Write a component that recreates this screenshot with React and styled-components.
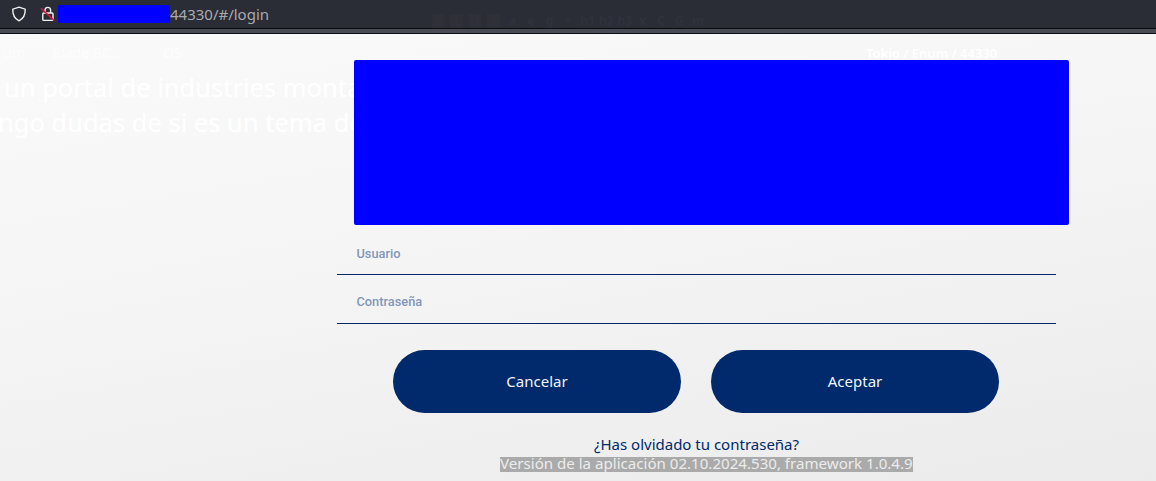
import React from 'react';
import styled, { createGlobalStyle } from 'styled-components';

const GlobalStyle = createGlobalStyle`
  html, body {
    margin: 0;
    padding: 0;
    height: 100%;
    overflow: hidden;
    background: #f0f0f0;
  }
  #root {
    height: 100%;
  }
`;

const Screen = styled.div`
  height: 481px;
  display: flex;
  flex-direction: column;
  font-family: "Noto Sans", sans-serif;
`;

const UrlBar = styled.div`
  position: relative;
  height: 28px;
  padding-left: 11px;
  display: flex;
  align-items: center;
  background: #2a2c36;
  border-bottom: 1px solid #0c0d10;
  color: #a9a9ad;
  font-size: 15px;
`;

const IconSlot = styled.span`
  display: flex;
  width: 16px;
  height: 16px;
  margin-right: ${props => props.gap}px;
`;

const Redacted = styled.span`
  width: 112px;
  height: 18px;
  background: #0000ff;
  border-radius: 2px;
`;

// leftover editor toolbar that shows through the dark bar
const GhostTools = styled.div`
  position: absolute;
  left: 410px;
  bottom: 0;
  display: flex;
  color: #2f323c;
  font-size: 12px;
  font-weight: 700;
  line-height: 14px;
`;

const GhostTool = styled.span`
  width: 18.6px;
  text-align: center;
  background: ${props => (props.filled ? '#2f2f37' : 'transparent')};
  background-clip: content-box;
  padding: 0 3px;
  box-sizing: border-box;
`;

const BarEdge = styled.div`
  height: 4px;
  background: #494c54;
  border-bottom: 1px solid #0c0d10;
`;

const Page = styled.main`
  position: relative;
  flex: 1;
  padding: 26px 0 0 337px;
  background: linear-gradient(170deg, #fafafa 0%, #f4f4f4 50%, #ebebeb 100%);
`;

const Ghost = styled.div`
  position: absolute;
  left: ${props => props.left}px;
  top: ${props => props.top}px;
  color: ${props => props.color || '#ffffff'};
  font-size: ${props => props.size}px;
  font-weight: ${props => props.weight || 400};
  white-space: nowrap;
`;

const Form = styled.form`
  position: relative;
  width: 719px;
  display: flex;
  flex-direction: column;
`;

const Banner = styled.div`
  width: 715px;
  height: 165px;
  margin-left: 17px;
  margin-bottom: 1px;
  background: #0000ff;
  border-radius: 2px;
`;

const Field = styled.div`
  height: 49px;
  box-sizing: border-box;
  padding: ${props => props.top}px 0 0 19.5px;
  border-bottom: 1px solid #002868;
  color: #8297b8;
  font-family: Roboto, sans-serif;
  font-size: 12.8px;
  font-weight: 500;
  line-height: 16px;
`;

const Buttons = styled.div`
  display: flex;
  gap: 30px;
  margin-top: 26px;
  padding-left: 56px;
`;

const Button = styled.button`
  width: 288px;
  height: 63px;
  padding: 0 0 2px;
  border: none;
  border-radius: 32px;
  background: #002a6b;
  color: #f2f4f8;
  font-family: "Noto Sans", sans-serif;
  font-size: 15px;
`;

const ForgotLink = styled.a`
  margin-top: 20px;
  text-align: center;
  color: #002a6b;
  font-size: 15px;
  line-height: 22px;
  height: 24px;
`;

const Version = styled.span`
  align-self: flex-start;
  margin-left: 163px;
  padding-bottom: 3px;
  background: #aaaaaa;
  color: #ececec;
  font-size: 15.1px;
  line-height: 12px;
  white-space: nowrap;
`;

function ShieldIcon() {
  return (
    <svg width="16" height="16" viewBox="0 0 16 16" fill="none" stroke="#f2f2f2" strokeWidth="1.4">
      <path d="M8 1.2 L14.2 3.2 C14.4 8.6 12.6 12.6 8 14.8 C3.4 12.6 1.6 8.6 1.8 3.2 Z" />
    </svg>
  );
}

function BrokenLockIcon() {
  return (
    <svg width="16" height="16" viewBox="0 0 16 16" fill="none">
      <path d="M5 7 V4.2 C5 2.4 6.2 1.4 7.8 1.4 C9.4 1.4 10.6 2.4 10.6 4.2 V7" stroke="#f2f2f2" strokeWidth="1.4" />
      <rect x="2.8" y="7" width="10.2" height="7.4" rx="1" stroke="#f2f2f2" strokeWidth="1.4" />
      <path d="M1 2.4 L14.4 14.8" stroke="#e0143c" strokeWidth="1.5" />
    </svg>
  );
}

const TOOLS = ['', 'B', 'I', 'U', 'S', 'a', 'e', 'g', '=', 'h1', 'h2', 'h3', 'x', 'C', 'G', 'm'];

export default function App() {
  return (
    <Screen>
      <GlobalStyle />
      <UrlBar>
        <GhostTools>
          {TOOLS.map((tool, i) => (
            <GhostTool key={i} filled={i > 0 && i < 5}>{tool || '\u00a0'}</GhostTool>
          ))}
        </GhostTools>
        <IconSlot gap={13}><ShieldIcon /></IconSlot>
        <IconSlot gap={2}><BrokenLockIcon /></IconSlot>
        <Redacted />
        <span>44330/#/login</span>
      </UrlBar>
      <BarEdge />
      <Page>
        <Ghost left={3} top={9} size={14} color="#fdfdfd">um</Ghost>
        <Ghost left={52} top={9} size={14} color="#fdfdfd">Blade BC...</Ghost>
        <Ghost left={163} top={9} size={14} color="#fdfdfd">OS</Ghost>
        <Ghost left={866} top={10} size={13} weight={600}>Tokio / Enum / 44330</Ghost>
        <Ghost left={4} top={36} size={25.5}>un portal de industries montados</Ghost>
        <Ghost left={-2} top={71} size={25.5}>ngo dudas de si es un tema de</Ghost>
        <Form>
          <Banner />
          <Field top={20}>Usuario</Field>
          <Field top={19}>Contraseña</Field>
          <Buttons>
            <Button type="button">Cancelar</Button>
            <Button type="button">Aceptar</Button>
          </Buttons>
          <ForgotLink>¿Has olvidado tu contraseña?</ForgotLink>
          <Version>Versión de la aplicación 02.10.2024.530, framework 1.0.4.9</Version>
        </Form>
      </Page>
    </Screen>
  );
}
